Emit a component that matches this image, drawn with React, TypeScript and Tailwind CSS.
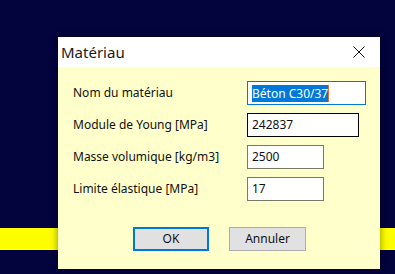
const fields = [
  { label: "Nom du matériau", value: "Béton C30/37", width: "w-[119px]", border: "border-[#0078d7]", selected: true },
  { label: "Module de Young [MPa]", value: "242837", width: "w-[112px]", border: "border-black", selected: false },
  { label: "Masse volumique [kg/m3]", value: "2500", width: "w-[77px]", border: "border-[#7a7a66]", selected: false },
  { label: "Limite élastique [MPa]", value: "17", width: "w-[77px]", border: "border-[#7a7a66]", selected: false },
];

const App = () => {
  return (
    <div
      className="relative h-[274px] w-[395px] overflow-hidden bg-[#03033d] pt-[228px]"
      style={{ fontFamily: '"Noto Sans", "Open Sans", sans-serif' }}
    >
      {/* bande jaune derrière la fenêtre */}
      <div className="h-[22px] border-b border-[#f4f4a0] bg-[#ffff00]" />

      {/* fenêtre Matériau */}
      <div className="absolute left-[58px] top-[37px] flex h-[232px] w-[322px] flex-col bg-[#ffffcc] shadow-[0_0_8px_rgba(0,0,0,0.45)]">
        <div className="flex h-[30px] items-center justify-between bg-white pl-[3px] pr-[15px]">
          <span className="text-[15px] text-[#1a1a1a]">Matériau</span>
          <svg width="12" height="12" viewBox="0 0 12 12" className="mr-[0px]">
            <path d="M0.5 0.5 L11.5 11.5 M11.5 0.5 L0.5 11.5" stroke="#111" strokeWidth="1" />
          </svg>
        </div>

        <div className="flex flex-1 flex-col pl-[15px] pt-[14px]">
          <div className="flex flex-col gap-[8px]">
            {fields.map((f) => (
              <div key={f.label} className="flex h-[24px] items-center">
                <span className="w-[174px] text-[12px] text-[#111]">{f.label}</span>
                <div
                  className={`flex h-[24px] items-center border bg-white pl-[4px] text-[12px] text-[#111] ${f.width} ${f.border}`}
                >
                  {f.selected ? (
                    <span className="flex items-center">
                      <span className="bg-[#0078d7] leading-[17px] text-white">{f.value}</span>
                      <span className="h-[17px] w-px bg-[#e07030]" />
                    </span>
                  ) : (
                    <span>{f.value}</span>
                  )}
                </div>
              </div>
            ))}
          </div>

          <div className="mt-[26px] flex gap-[20px] pl-[60px]">
            <button className="h-[24px] w-[76px] border-2 border-[#0078d7] bg-[#e1e1e1] text-[12px] text-[#111]">
              OK
            </button>
            <button className="h-[24px] w-[77px] border border-[#adadad] bg-[#e1e1e1] text-[12px] text-[#111]">
              Annuler
            </button>
          </div>
        </div>
      </div>
    </div>
  );
};

export default App;
